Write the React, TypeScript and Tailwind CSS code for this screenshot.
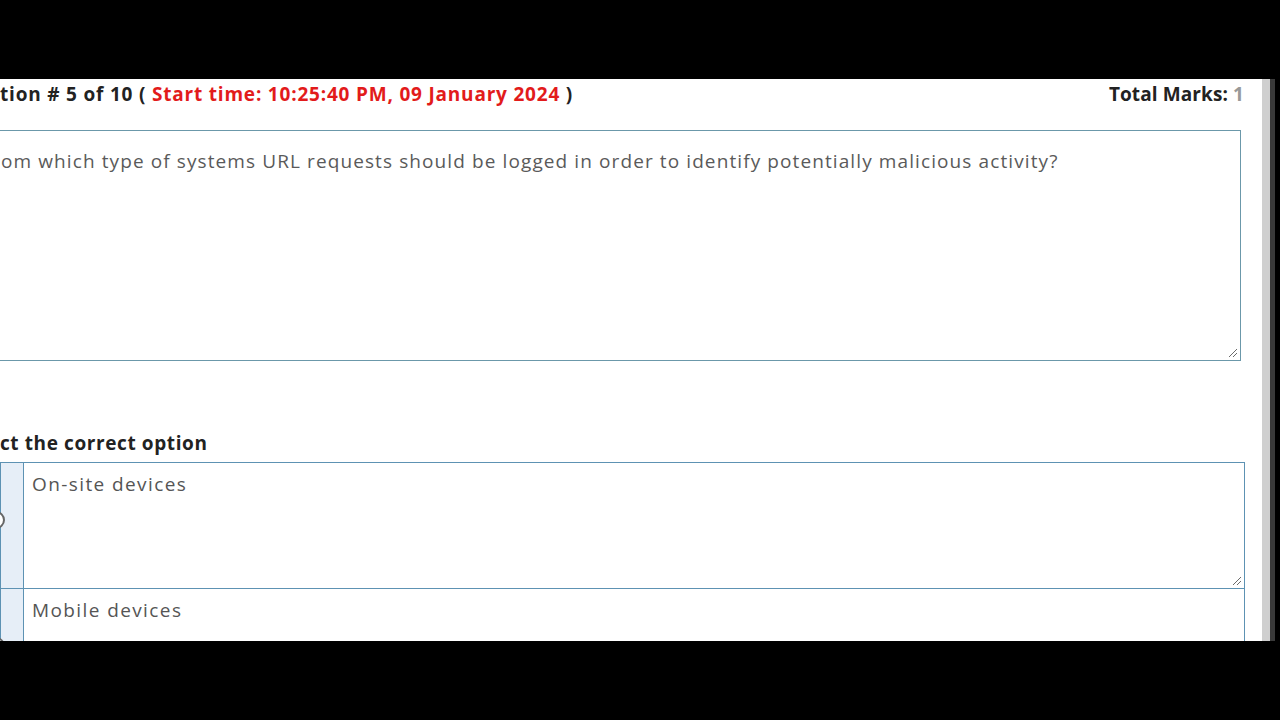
const FONT = "font-['Open_Sans','Liberation_Sans',sans-serif]"

function Grip() {
  return (
    <svg width="10" height="10" viewBox="0 0 10 10" className="absolute bottom-[2px] right-[2px]">
      <path d="M9 1 L1 9 M9 5 L5 9" stroke="#6b6b6b" strokeWidth="1" />
    </svg>
  )
}

function Option({ text }: { text: string }) {
  return (
    <div className="flex h-[127px] shrink-0 border border-[#5d92b3] bg-white">
      <div className="relative w-[23px] shrink-0 border-r border-[#5d92b3] bg-[#e6eef7]">
        <div className="absolute left-[-14px] top-[48px] h-[18px] w-[18px] rounded-full border-2 border-[#666] bg-white" />
      </div>
      <div className="relative flex-1 px-[8px] pt-[7px] text-[19px] tracking-[1.4px] text-[#555]">
        {text}
        <Grip />
      </div>
    </div>
  )
}

export default function App() {
  return (
    <div className={`flex h-[720px] w-[1280px] flex-col bg-black ${FONT}`}>
      <div className="h-[79px] shrink-0" />
      <div className="flex h-[562px] shrink-0">
        <div className="flex w-[1262px] flex-col overflow-hidden bg-white">
          <div className="flex h-[31px] shrink-0 items-center justify-between pr-[18px] text-[19px] font-bold text-[#222]">
            <div className="tracking-[0.8px]">
              tion # 5 of 10 ({' '}
              <span className="text-[#e21b1b]">Start time: 10:25:40 PM, 09 January 2024</span> )
            </div>
            <div className="tracking-[0.1px]">
              Total Marks: <span className="text-[#999]">1</span>
            </div>
          </div>
          <div className="relative mr-[21px] ml-[-2px] mt-[20px] h-[231px] shrink-0 border border-[#6b98aa]">
            <p className="pl-[2px] pt-[16px] text-[19px] tracking-[1.1px] text-[#5a5a5a]">
              om which type of systems URL requests should be logged in order to identify potentially malicious activity?
            </p>
            <Grip />
          </div>
          <div className="mt-[68px] shrink-0 text-[19px] font-bold tracking-[0.6px] text-[#222]">ct the correct option</div>
          <div className="mr-[17px] mt-[4px] flex shrink-0 flex-col">
            <Option text="On-site devices" />
            <div className="-mt-px">
              <Option text="Mobile devices" />
            </div>
          </div>
        </div>
        <div className="w-[8px] bg-[#cfcfcf]" />
        <div className="w-[5px] bg-[#3a3a3a]" />
      </div>
    </div>
  )
}
